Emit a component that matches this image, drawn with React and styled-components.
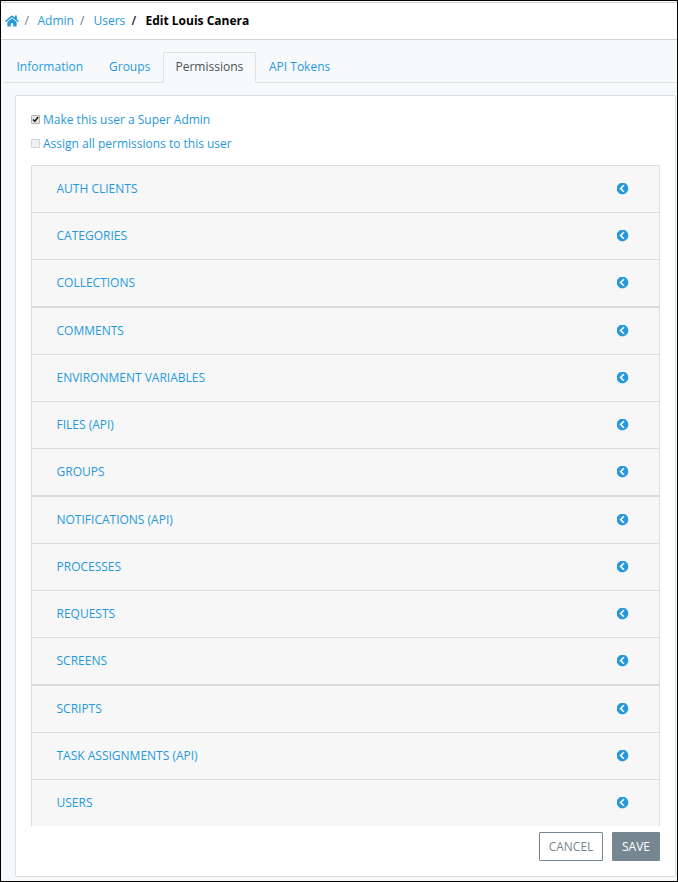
import React from "react";
import styled, { createGlobalStyle, css } from "styled-components";
import { FaHome, FaChevronCircleLeft } from "react-icons/fa";

const GlobalStyle = createGlobalStyle`
  *, *::before, *::after { box-sizing: border-box; }
  body { margin: 0; background: #f7f9fb; }
`;

const Page = styled.div`
  display: flex;
  flex-direction: column;
  width: 678px;
  height: 882px;
  border: 1px solid #000;
  background: #f7f9fb;
  color: #2699dd;
  font: 12px/18px "Open Sans", sans-serif;
  overflow: hidden;
  white-space: nowrap;
`;

const Breadcrumb = styled.nav`
  display: flex;
  align-items: center;
  height: 38px;
  margin-top: 1px;
  padding: 0 0 1px 4px;
  border: solid #d0d2d4;
  border-width: 1px 0;
  background: #fff;
`;

const HomeIcon = styled(FaHome)`
  width: 14px;
  height: 14px;
  flex: none;
`;

const Slash = styled.span`
  width: ${(p) => p.$width}px;
  padding-left: ${(p) => p.$indent}px;
  color: ${(p) => (p.$strong ? "#222" : "#6c757d")};
  font-weight: ${(p) => (p.$strong ? 600 : 400)};
`;

const Crumb = styled.span`
  width: ${(p) => p.$width}px;
`;

const Current = styled.strong`
  color: #000;
  font-weight: 700;
`;

const Tabs = styled.div`
  display: flex;
  height: 31px;
  margin: 12px 0 0 3px;
  box-shadow: inset 0 -1px #dee2e6;
`;

const Tab = styled.div`
  width: ${(p) => p.$width}px;
  padding: 5px 0 0 ${(p) => p.$indent || 11.5}px;
  border: 1px solid transparent;
  border-bottom: 0;
  ${(p) =>
    p.$active &&
    css`
      border-color: #dee2e6;
      background: #f7f9fb;
      color: #495057;
    `}
`;

const Card = styled.main`
  display: flex;
  flex-direction: column;
  width: 661px;
  height: 782px;
  margin: 12px 0 0 14px;
  padding: 11px 15px 0;
  border: 1px solid #dcdfe2;
  border-radius: 2px;
  background: #fff;
`;

const Option = styled.label`
  display: flex;
  align-items: flex-start;
  height: 24px;
  padding-top: 4px;
  gap: 3px;
`;

const Box = styled.span`
  display: flex;
  width: 9px;
  height: 9px;
  margin-top: 4px;
  border: 1px solid ${(p) => (p.$muted ? "#d3d3d3" : "#b3b3b3")};
  border-radius: 1px;
  background: ${(p) => (p.$muted ? "#f0f0f0" : "#e6e6e6")};
`;

const Accordion = styled.div`
  margin-top: 10px;
  border: 1px solid #dcdddd;
  border-bottom: 0;
  border-radius: 2px 2px 0 0;
`;

const Row = styled.div`
  display: flex;
  align-items: flex-start;
  justify-content: space-between;
  height: ${(p) => (p.$last ? 46 : p.$thick ? 48 : 47)}px;
  padding: 14px 30px 0 24.5px;
  border-bottom: ${(p) => (p.$last ? 0 : p.$thick ? 2 : 1)}px solid ${(p) => (p.$thick ? "#dadbdb" : "#dcdddd")};
  background: #f7f7f7;
`;

const Chevron = styled(FaChevronCircleLeft)`
  width: 13px;
  height: 13px;
  margin-top: 2px;
  padding: 0.5px;
`;

const Actions = styled.div`
  display: flex;
  justify-content: flex-end;
  gap: 9px;
  margin-top: 6px;
`;

const Button = styled.button`
  width: ${(p) => p.$width}px;
  height: 29px;
  padding: 0;
  border: 1px solid #768791;
  border-radius: 1px;
  background: ${(p) => (p.$filled ? "#768791" : "#fff")};
  color: ${(p) => (p.$filled ? "#fff" : "#768791")};
  font: inherit;
`;

const rows = [
  { title: "AUTH CLIENTS" },
  { title: "CATEGORIES" },
  { title: "COLLECTIONS", thick: true },
  { title: "COMMENTS" },
  { title: "ENVIRONMENT VARIABLES" },
  { title: "FILES (API)" },
  { title: "GROUPS", thick: true },
  { title: "NOTIFICATIONS (API)" },
  { title: "PROCESSES" },
  { title: "REQUESTS" },
  { title: "SCREENS", thick: true },
  { title: "SCRIPTS" },
  { title: "TASK ASSIGNMENTS (API)" },
  { title: "USERS" },
];

export default function App() {
  return (
    <>
      <GlobalStyle />
      <Page>
        <Breadcrumb>
          <HomeIcon />
          <Slash $width={18.5} $indent={5.5}>/</Slash>
          <Crumb $width={37}>Admin</Crumb>
          <Slash $width={19} $indent={5.5}>/</Slash>
          <Crumb $width={32}>Users</Crumb>
          <Slash $width={20} $indent={6} $strong>/</Slash>
          <Current>Edit Louis Canera</Current>
        </Breadcrumb>
        <Tabs>
          <Tab $width={92}>Information</Tab>
          <Tab $width={67} $indent={12}>Groups</Tab>
          <Tab $width={93} $active>Permissions</Tab>
          <Tab $width={90} $indent={12}>API Tokens</Tab>
        </Tabs>
        <Card>
          <Option>
            <Box>
              <svg width="7" height="7" viewBox="0 0 7 7" fill="none" stroke="#222" strokeWidth="1.6">
                <path d="M1 3.5 2.8 5.3 6.2 1" />
              </svg>
            </Box>
            Make this user a Super Admin
          </Option>
          <Option>
            <Box $muted />
            Assign all permissions to this user
          </Option>
          <Accordion>
            {rows.map((row, i) => (
              <Row key={row.title} $thick={row.thick} $last={i === rows.length - 1}>
                <span>{row.title}</span>
                <Chevron />
              </Row>
            ))}
          </Accordion>
          <Actions>
            <Button $width={64}>CANCEL</Button>
            <Button $width={48} $filled>SAVE</Button>
          </Actions>
        </Card>
      </Page>
    </>
  );
}
